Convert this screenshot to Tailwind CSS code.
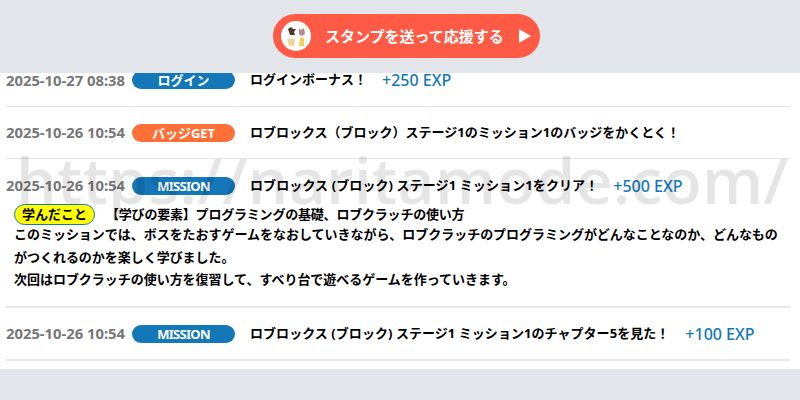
<!DOCTYPE html>
<html lang="ja">
<head>
    <meta charset="UTF-8">
    <title>Activity log</title>
    <script src="https://cdn.jsdelivr.net/npm/@tailwindcss/browser@4"></script>
</head>
<body class="bg-[#e2e5ea] font-['Noto_Sans','Noto_Sans_CJK_JP',sans-serif]">
    <div class="relative w-[800px] h-[400px] overflow-hidden">
        <!-- Stamp button -->
        <div class="h-[73px] pt-[14px] flex justify-center">
            <a href="#" class="ml-[13px] w-[267px] h-[44px] rounded-full bg-[#ff5a45] flex items-center pl-[8px] pr-[9px] text-white">
                <svg width="30" height="30" viewBox="0 0 30 30" class="shrink-0">
                    <circle cx="15" cy="15" r="15" fill="#fff"/>
                    <path d="M7 8 L10 6 L12 8 L15 8 L13 11 L14 14 L9 14 L8 11 Z" fill="#4a3b22"/>
                    <path d="M18 7 L20 9 L23 7 L24 13 L21 15 L18 13 Z" fill="#b58c8c"/>
                    <path d="M6 18 L14 18 L13 25 L8 25 Z" fill="#eed49a"/>
                    <path d="M19 16 L23 17 L23 25 L18 25 Z" fill="#f0cf5a"/>
                </svg>
                <span class="ml-[14px] text-[15px] font-bold whitespace-nowrap">スタンプを送って応援する</span>
                <svg width="12" height="14" viewBox="0 0 12 14" class="ml-auto shrink-0">
                    <path d="M0 0 L12 7 L0 14 Z" fill="#fff"/>
                </svg>
            </a>
        </div>

        <!-- Log list -->
        <div class="h-[296px] bg-white pl-[6px] pr-[10px] text-[13px] font-bold text-black overflow-hidden">
            <div class="h-[34px] border-b border-[#e4e4e4]">
                <div class="flex items-center h-[14px]">
                    <span class="w-[126px] text-[14.8px] text-[#777] whitespace-nowrap">2025-10-27 08:38</span>
                    <span class="w-[103px] h-[18px] leading-[18px] rounded-full bg-[#1377b8] text-white text-center">ログイン</span>
                    <span class="ml-[15px]">ログインボーナス！</span>
                    <span class="ml-[15px] text-[16px] font-medium text-[#1377b8]">+250 EXP</span>
                </div>
            </div>
            <div class="h-[52px] flex items-center border-b border-[#e4e4e4]">
                <span class="w-[126px] text-[14.8px] text-[#777] whitespace-nowrap">2025-10-26 10:54</span>
                <span class="w-[103px] h-[18px] leading-[18px] rounded-full bg-[#ff7038] text-white text-center">バッジGET</span>
                <span class="ml-[15px]">ロブロックス（ブロック）ステージ1のミッション1のバッジをかくとく！</span>
            </div>
            <div class="h-[149px] border-b-2 border-[#e8e8e8]">
                <div class="h-[53px] flex items-center">
                    <span class="w-[126px] text-[14.8px] text-[#777] whitespace-nowrap">2025-10-26 10:54</span>
                    <span class="w-[103px] h-[18px] leading-[18px] rounded-full bg-[#1377b8] text-white text-center tracking-[-0.7px]">MISSION</span>
                    <span class="ml-[15px] tracking-[0.1px]">ロブロックス (ブロック) ステージ1 ミッション1をクリア！</span>
                    <span class="ml-[15px] text-[16px] font-medium text-[#1377b8]">+500 EXP</span>
                </div>
                <div class="-mt-[9px] pl-[8px] leading-[22.4px]">
                    <p class="flex items-center">
                        <span class="w-[81px] h-[21px] leading-[18px] rounded-full bg-[#ffff00] border-[1.5px] border-[#1377b8] text-center">学んだこと</span>
                        <span class="ml-[11px] tracking-[-0.2px]">【学びの要素】プログラミングの基礎、ロブクラッチの使い方</span>
                    </p>
                    <p class="-mt-[2px] tracking-[-0.03px]">このミッションでは、ボスをたおすゲームをなおしていきながら、ロブクラッチのプログラミングがどんなことなのか、どんなもの<br>がつくれるのかを楽しく学びました。<br>次回はロブクラッチの使い方を復習して、すべり台で遊べるゲームを作っていきます。</p>
                </div>
            </div>
            <div class="h-[53px] flex items-center border-b-2 border-[#e8e8e8]">
                <span class="w-[126px] text-[14.8px] text-[#777] whitespace-nowrap">2025-10-26 10:54</span>
                <span class="w-[103px] h-[18px] leading-[18px] rounded-full bg-[#1377b8] text-white text-center tracking-[-0.7px]">MISSION</span>
                <span class="ml-[15px] tracking-[0.05px]">ロブロックス (ブロック) ステージ1 ミッション1のチャプター5を見た！</span>
                <span class="ml-[16px] text-[16px] font-medium text-[#1377b8]">+100 EXP</span>
            </div>
        </div>

        <!-- Watermark -->
        <div class="absolute left-[16px] top-[135px] text-[64px] leading-[90px] tracking-[0.25px] text-black/10 font-['Open_Sans',sans-serif] font-semibold whitespace-nowrap pointer-events-none">https://naritamode.com/</div>
    </div>
</body>
</html>
